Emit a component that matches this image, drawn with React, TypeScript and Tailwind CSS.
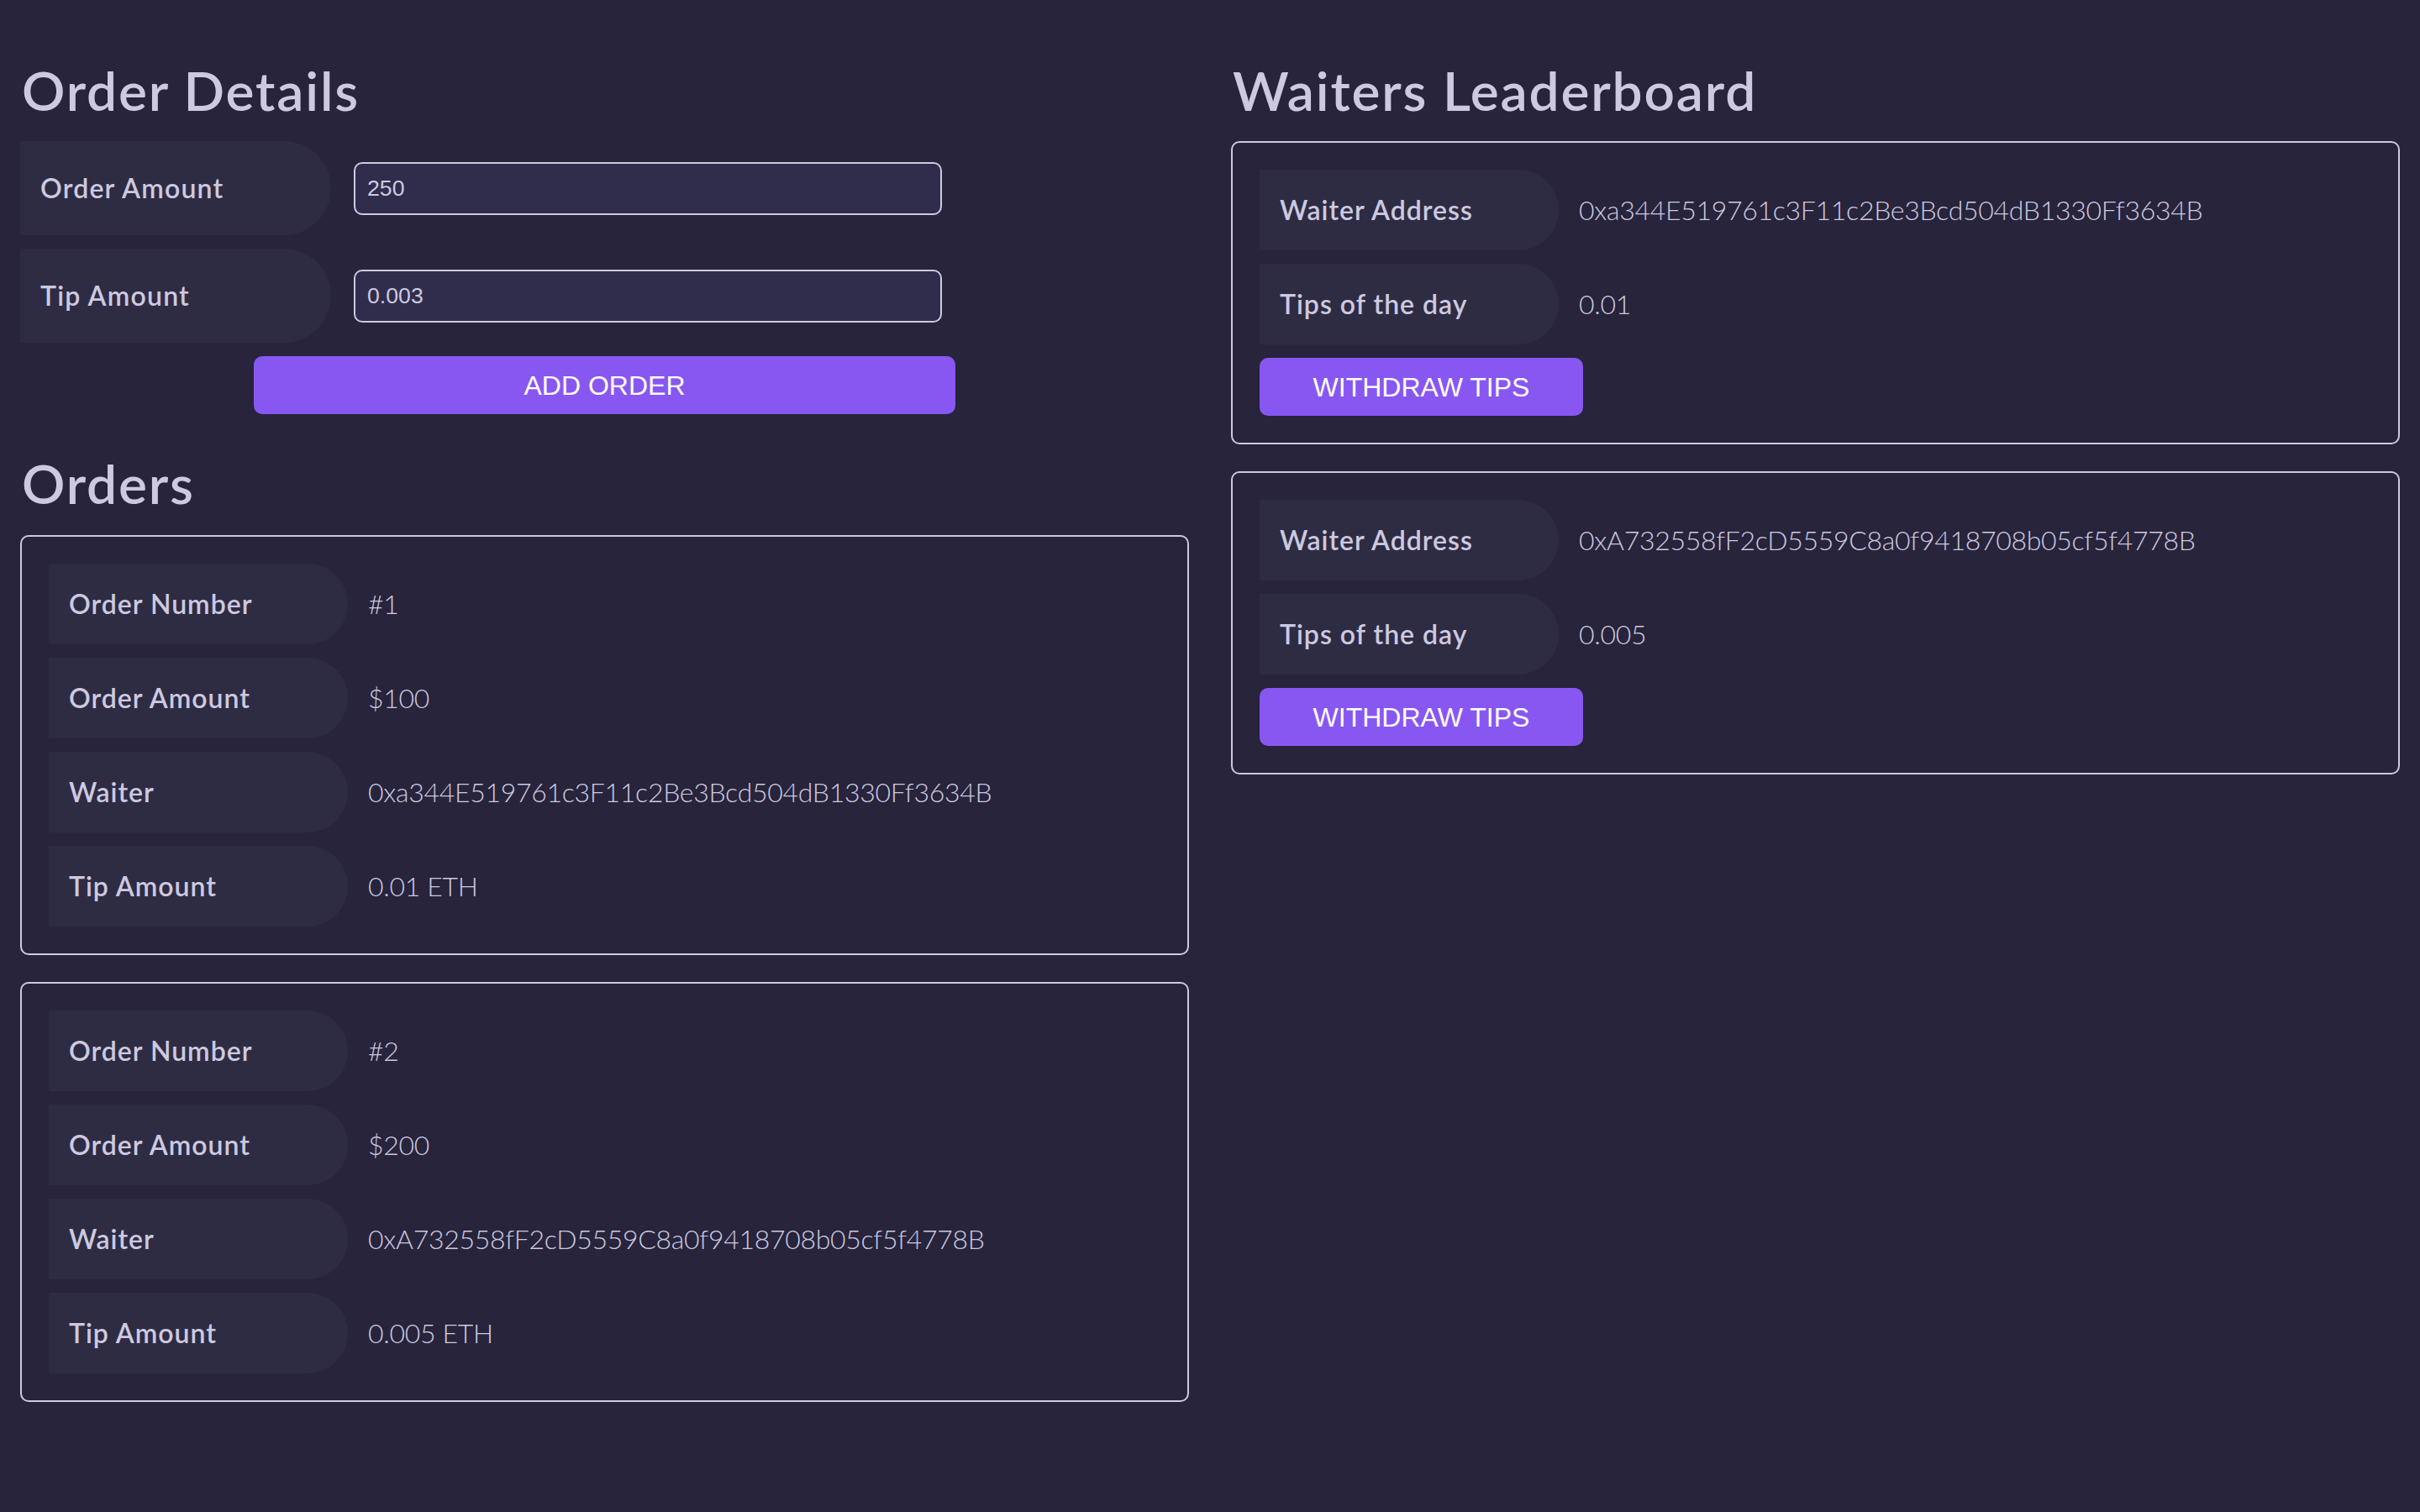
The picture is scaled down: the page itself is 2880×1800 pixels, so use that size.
import React from "react";

interface RowProps {
  label: string;
  value: string;
}

const InfoRow = ({ label, value }: RowProps) => {
  return (
    <div className="flex items-center h-[96px]">
      <div className="h-full w-[356px] shrink-0 flex items-center pl-[24px] bg-[#2e2c43] rounded-r-[56px] font-semibold tracking-[1px]">
        {label}
      </div>
      <div className="pl-[24px] font-light tracking-[-0.3px]">{value}</div>
    </div>
  );
};

interface Order {
  id: number;
  amount: number;
  waiter: string;
  tip: string;
}

const orders: Order[] = [
  { id: 1, amount: 100, waiter: "0xa344E519761c3F11c2Be3Bcd504dB1330Ff3634B", tip: "0.01" },
  { id: 2, amount: 200, waiter: "0xA732558fF2cD5559C8a0f9418708b05cf5f4778B", tip: "0.005" },
];

const waiters = [
  { address: "0xa344E519761c3F11c2Be3Bcd504dB1330Ff3634B", tips: "0.01" },
  { address: "0xA732558fF2cD5559C8a0f9418708b05cf5f4778B", tips: "0.005" },
];

const FormRow = ({ label, value }: { label: string; value: string }) => (
  <div className="flex items-center h-[112px]">
    <div className="h-full w-[370px] shrink-0 flex items-center pl-[24px] bg-[#2e2c43] rounded-r-[56px] font-semibold tracking-[1.2px]">
      {label}
    </div>
    <input
      type="text"
      defaultValue={value}
      className="ml-[27px] w-[700px] h-[63px] bg-[#302d4c] border-2 border-[#cdc9e0] rounded-[10px] px-[14px] text-[26.67px] text-[#cdc9e0] outline-none"
      style={{ fontFamily: '"Liberation Sans", Arial, sans-serif' }}
    />
  </div>
);

export default function App() {
  return (
    <div
      className="min-h-screen bg-[#27243b] text-[#cdc9e0] text-[32px] px-[24px] pt-[70px] pb-[60px] grid grid-cols-2 gap-x-[50px] items-start"
      style={{ fontFamily: 'Lato, "Noto Sans", sans-serif' }}
    >
      <div className="flex flex-col">
        <h1 className="text-[64px] leading-[76px] font-semibold tracking-[1.8px] pl-[2px] mb-[22px]">Order Details</h1>
        <div className="flex flex-col gap-[16px]">
          <FormRow label="Order Amount" value="250" />
          <FormRow label="Tip Amount" value="0.003" />
          <div className="flex justify-center">
            <button
              className="w-[835px] h-[69px] bg-[#8857f1] text-white rounded-[10px] text-[32px]"
              style={{ fontFamily: '"Liberation Sans", Arial, sans-serif' }}
            >
              ADD ORDER
            </button>
          </div>
        </div>

        <h1 className="text-[64px] leading-[76px] font-semibold tracking-[1.8px] pl-[2px] mt-[45px] mb-[23px]">Orders</h1>
        <div className="flex flex-col gap-[32px]">
          {orders.map((o) => (
            <div key={o.id} className="border-2 border-[#cdc9e0] rounded-[10px] p-[32px] flex flex-col gap-[16px]">
              <InfoRow label="Order Number" value={`#${o.id}`} />
              <InfoRow label="Order Amount" value={`$${o.amount}`} />
              <InfoRow label="Waiter" value={o.waiter} />
              <InfoRow label="Tip Amount" value={`${o.tip} ETH`} />
            </div>
          ))}
        </div>
      </div>

      <div className="flex flex-col">
        <h1 className="text-[64px] leading-[76px] font-semibold tracking-[1.8px] pl-[2px] mb-[22px]">Waiters Leaderboard</h1>
        <div className="flex flex-col gap-[32px]">
          {waiters.map((w) => (
            <div key={w.address} className="border-2 border-[#cdc9e0] rounded-[10px] p-[32px] flex flex-col gap-[16px]">
              <InfoRow label="Waiter Address" value={w.address} />
              <InfoRow label="Tips of the day" value={w.tips} />
              <button
                className="w-[385px] h-[69px] bg-[#8857f1] text-white rounded-[10px] text-[32px]"
                style={{ fontFamily: '"Liberation Sans", Arial, sans-serif' }}
              >
                WITHDRAW TIPS
              </button>
            </div>
          ))}
        </div>
      </div>
    </div>
  );
}
